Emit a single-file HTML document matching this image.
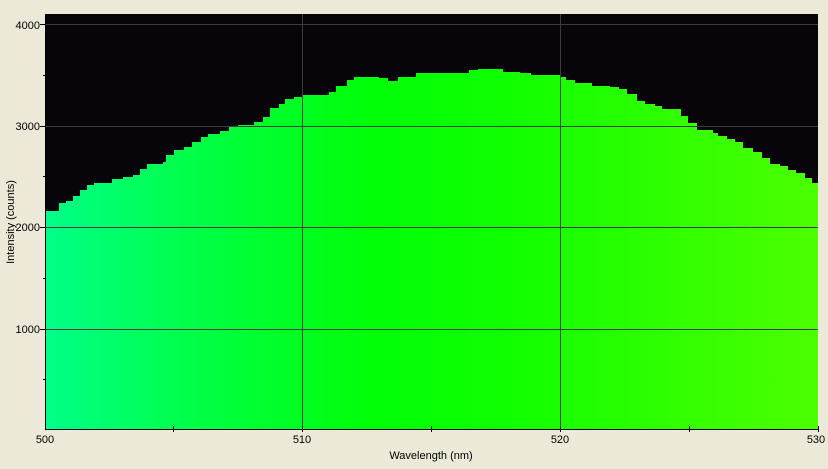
<!DOCTYPE html>
<html><head><style>
body{margin:0;width:828px;height:464px;background:#ece9d8;overflow:hidden;font-family:"Liberation Sans",sans-serif;}
svg text{font-family:"Liberation Sans",sans-serif;font-size:11px;fill:#000}
</style></head><body>
<svg width="828" height="464" xmlns="http://www.w3.org/2000/svg">
<defs>
<linearGradient id="g" x1="45" x2="818" y1="0" y2="0" gradientUnits="userSpaceOnUse">
<stop offset="0" stop-color="#00ff88"/>
<stop offset="0.2" stop-color="#00ff44"/>
<stop offset="0.42" stop-color="#00ff08"/>
<stop offset="0.6" stop-color="#10ff00"/>
<stop offset="1" stop-color="#4cff00"/>
</linearGradient>
</defs>
<rect x="45" y="14" width="773" height="415" fill="#07050a"/>
<path fill="url(#g)" d="M45,429 V211 H59 V203 H66 V201 H73 V196 H80 V190 H87 V185 H94 V183 H112 V179 H123 V177 H133 V175 H140 V169 H147 V164 H163 V162 H166 V155 H174 V150 H184 V147 H192 V142 H201 V137 H208 V134 H220 V131 H229 V127 H238 V125 H254 V122 H263 V117 H270 V108 H279 V104 H285 V99 H294 V97 H302 V95 H329 V92 H336 V86 H347 V80 H354 V77 H379 V78 H388 V81 H398 V77 H416 V73 H451 V73 H469 V70 H478 V69 H503 V72 H520 V73 H531 V75 H560 V77 H566 V80 H575 V83 H592 V86 H610 V87 H619 V89 H627 V94 H637 V101 H645 V104 H655 V106 H662 V109 H681 V116 H688 V123 H697 V130 H713 V133 H718 V136 H727 V139 H735 V142 H743 V148 H753 V152 H762 V158 H770 V164 H780 V166 H788 V170 H796 V173 H805 V178 H812 V183 H818 V429 Z"/>
<g stroke="#3c3c3c" stroke-width="1">
<line x1="45" x2="818" y1="24.5" y2="24.5"/>
<line x1="45" x2="818" y1="126.5" y2="126.5"/>
<line x1="45" x2="818" y1="227.5" y2="227.5"/>
<line x1="45" x2="818" y1="329.5" y2="329.5"/>
<line x1="302.5" x2="302.5" y1="14" y2="429"/>
<line x1="560.5" x2="560.5" y1="14" y2="429"/>
</g>
<g stroke="#000" stroke-width="1">
<line x1="45.5" x2="45.5" y1="14" y2="430"/>
<line x1="45" x2="818" y1="429.5" y2="429.5"/>
<line x1="40" x2="45" y1="24.5" y2="24.5"/>
<line x1="43" x2="45" y1="75.5" y2="75.5"/>
<line x1="40" x2="45" y1="126.5" y2="126.5"/>
<line x1="43" x2="45" y1="176.5" y2="176.5"/>
<line x1="40" x2="45" y1="227.5" y2="227.5"/>
<line x1="43" x2="45" y1="278.5" y2="278.5"/>
<line x1="40" x2="45" y1="329.5" y2="329.5"/>
<line x1="43" x2="45" y1="379.5" y2="379.5"/>
<line x1="173.5" x2="173.5" y1="426" y2="432"/>
<line x1="302.5" x2="302.5" y1="426" y2="432"/>
<line x1="431.5" x2="431.5" y1="426" y2="432"/>
<line x1="560.5" x2="560.5" y1="426" y2="432"/>
<line x1="689.5" x2="689.5" y1="426" y2="432"/>
<line x1="818.5" x2="818.5" y1="426" y2="432"/>
</g>
<g text-anchor="end">
<text x="40" y="29">4000</text>
<text x="40" y="130">3000</text>
<text x="40" y="231">2000</text>
<text x="40" y="333">1000</text>
</g>
<g text-anchor="middle">
<text x="45" y="443">500</text>
<text x="302" y="443">510</text>
<text x="560" y="443">520</text>
<text x="816" y="443">530</text>
<text x="431" y="459">Wavelength (nm)</text>
<text transform="translate(14,222) rotate(-90)">Intensity (counts)</text>
</g>
</svg>
</body></html>
